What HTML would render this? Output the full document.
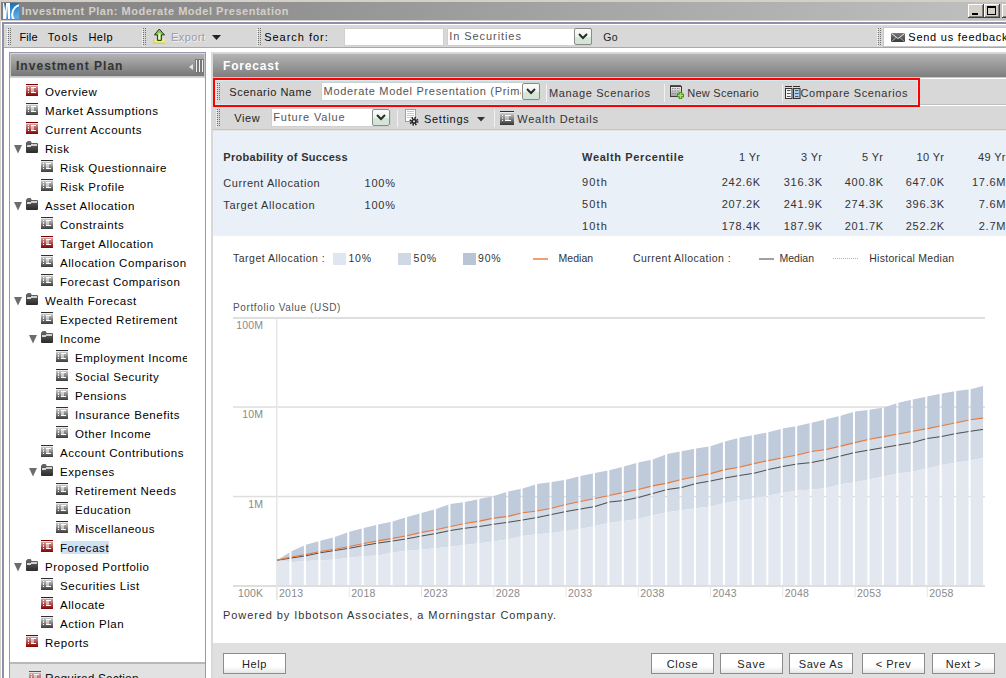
<!DOCTYPE html><html><head><meta charset="utf-8"><style>
html,body{margin:0;padding:0;}
body{width:1006px;height:678px;overflow:hidden;position:relative;background:#d4d0c8;font-family:"Liberation Sans",sans-serif;}
.t{position:absolute;white-space:nowrap;font-family:"Liberation Sans",sans-serif;}
.r{position:absolute;}
svg{position:absolute;}
</style></head><body>

<div class="r" style="left:1px;top:2px;width:1005px;height:18px;background:linear-gradient(to right,#808080,#c0c0c0);"></div>
<div class="r" style="left:0px;top:20px;width:1006px;height:1px;background:#d4d0c8;"></div>
<div class="r" style="left:1px;top:21px;width:1005px;height:657px;background:#fff;"></div>
<div class="r" style="left:2px;top:22px;width:1004px;height:656px;background:#9090ae;"></div>
<div class="r" style="left:4px;top:24px;width:1002px;height:654px;background:#fff;"></div>
<svg style="left:3px;top:3px" width="16" height="16" viewBox="0 0 16 16"><defs><linearGradient id="lg" x1="0" y1="0" x2="0.4" y2="1"><stop offset="0" stop-color="#0062b0"/><stop offset="1" stop-color="#5aaae6"/></linearGradient></defs><rect width="16" height="16" fill="url(#lg)"/><path d="M0.1 0 H7 V16 H0.1 Z" fill="#fff"/><path d="M1.1 0 L3.1 0 L2.3 8.2 Z" fill="#0a6cb8"/><path d="M3.4 16 L4.9 16 L4.1 2.5 Z" fill="#1a78c0"/><circle cx="18.7" cy="11.3" r="9.5" fill="none" stroke="#fff" stroke-width="2"/></svg>
<div class="t" style="left:21.5px;top:6.00px;font-size:11px;line-height:11px;font-weight:bold;letter-spacing:0.523px;color:#d4d0c8;">Investment Plan: Moderate Model Presentation</div>
<div class="r" style="left:968px;top:4px;width:16px;height:14px;background:#d4d0c8;box-shadow:inset -1px -1px #404040,inset 1px 1px #fff,inset -2px -2px #808080;"></div>
<div class="r" style="left:984px;top:4px;width:16px;height:14px;background:#d4d0c8;box-shadow:inset -1px -1px #404040,inset 1px 1px #fff,inset -2px -2px #808080;"></div>
<div class="r" style="left:1002px;top:4px;width:16px;height:14px;background:#d4d0c8;box-shadow:inset -1px -1px #404040,inset 1px 1px #fff,inset -2px -2px #808080;"></div>
<div class="r" style="left:972px;top:13px;width:6px;height:2px;background:#000;"></div>
<div class="r" style="left:987px;top:6px;width:9px;height:9px;border:1px solid #000;border-top-width:2px;box-sizing:border-box;"></div>
<div class="r" style="left:4px;top:25px;width:1002px;height:22px;background:#d8d8d8;"></div>
<div class="r" style="left:4px;top:47px;width:1002px;height:1px;background:#a8a8a8;"></div>
<div class="r" style="left:8px;top:28px;width:1px;height:1px;background:#707070;"></div>
<div class="r" style="left:10px;top:28px;width:1px;height:1px;background:#707070;"></div>
<div class="r" style="left:7px;top:29px;width:1px;height:1px;background:#fff;"></div>
<div class="r" style="left:8px;top:30px;width:1px;height:1px;background:#707070;"></div>
<div class="r" style="left:10px;top:30px;width:1px;height:1px;background:#707070;"></div>
<div class="r" style="left:7px;top:31px;width:1px;height:1px;background:#fff;"></div>
<div class="r" style="left:8px;top:32px;width:1px;height:1px;background:#707070;"></div>
<div class="r" style="left:10px;top:32px;width:1px;height:1px;background:#707070;"></div>
<div class="r" style="left:7px;top:33px;width:1px;height:1px;background:#fff;"></div>
<div class="r" style="left:8px;top:34px;width:1px;height:1px;background:#707070;"></div>
<div class="r" style="left:10px;top:34px;width:1px;height:1px;background:#707070;"></div>
<div class="r" style="left:7px;top:35px;width:1px;height:1px;background:#fff;"></div>
<div class="r" style="left:8px;top:36px;width:1px;height:1px;background:#707070;"></div>
<div class="r" style="left:10px;top:36px;width:1px;height:1px;background:#707070;"></div>
<div class="r" style="left:7px;top:37px;width:1px;height:1px;background:#fff;"></div>
<div class="r" style="left:8px;top:38px;width:1px;height:1px;background:#707070;"></div>
<div class="r" style="left:10px;top:38px;width:1px;height:1px;background:#707070;"></div>
<div class="r" style="left:7px;top:39px;width:1px;height:1px;background:#fff;"></div>
<div class="r" style="left:8px;top:40px;width:1px;height:1px;background:#707070;"></div>
<div class="r" style="left:10px;top:40px;width:1px;height:1px;background:#707070;"></div>
<div class="r" style="left:7px;top:41px;width:1px;height:1px;background:#fff;"></div>
<div class="r" style="left:8px;top:42px;width:1px;height:1px;background:#707070;"></div>
<div class="r" style="left:10px;top:42px;width:1px;height:1px;background:#707070;"></div>
<div class="r" style="left:7px;top:43px;width:1px;height:1px;background:#fff;"></div>
<div class="r" style="left:8px;top:44px;width:1px;height:1px;background:#707070;"></div>
<div class="r" style="left:10px;top:44px;width:1px;height:1px;background:#707070;"></div>
<div class="r" style="left:7px;top:45px;width:1px;height:1px;background:#fff;"></div>
<div class="t" style="left:19.5px;top:32.00px;font-size:11px;line-height:11px;letter-spacing:0.092px;color:#000;">File</div>
<div class="t" style="left:47.8px;top:32.00px;font-size:11px;line-height:11px;letter-spacing:1.03px;color:#000;">Tools</div>
<div class="t" style="left:88.4px;top:32.00px;font-size:11px;line-height:11px;letter-spacing:0.526px;color:#000;">Help</div>
<div class="r" style="left:143px;top:28px;width:1px;height:1px;background:#707070;"></div>
<div class="r" style="left:145px;top:28px;width:1px;height:1px;background:#707070;"></div>
<div class="r" style="left:142px;top:29px;width:1px;height:1px;background:#fff;"></div>
<div class="r" style="left:143px;top:30px;width:1px;height:1px;background:#707070;"></div>
<div class="r" style="left:145px;top:30px;width:1px;height:1px;background:#707070;"></div>
<div class="r" style="left:142px;top:31px;width:1px;height:1px;background:#fff;"></div>
<div class="r" style="left:143px;top:32px;width:1px;height:1px;background:#707070;"></div>
<div class="r" style="left:145px;top:32px;width:1px;height:1px;background:#707070;"></div>
<div class="r" style="left:142px;top:33px;width:1px;height:1px;background:#fff;"></div>
<div class="r" style="left:143px;top:34px;width:1px;height:1px;background:#707070;"></div>
<div class="r" style="left:145px;top:34px;width:1px;height:1px;background:#707070;"></div>
<div class="r" style="left:142px;top:35px;width:1px;height:1px;background:#fff;"></div>
<div class="r" style="left:143px;top:36px;width:1px;height:1px;background:#707070;"></div>
<div class="r" style="left:145px;top:36px;width:1px;height:1px;background:#707070;"></div>
<div class="r" style="left:142px;top:37px;width:1px;height:1px;background:#fff;"></div>
<div class="r" style="left:143px;top:38px;width:1px;height:1px;background:#707070;"></div>
<div class="r" style="left:145px;top:38px;width:1px;height:1px;background:#707070;"></div>
<div class="r" style="left:142px;top:39px;width:1px;height:1px;background:#fff;"></div>
<div class="r" style="left:143px;top:40px;width:1px;height:1px;background:#707070;"></div>
<div class="r" style="left:145px;top:40px;width:1px;height:1px;background:#707070;"></div>
<div class="r" style="left:142px;top:41px;width:1px;height:1px;background:#fff;"></div>
<div class="r" style="left:143px;top:42px;width:1px;height:1px;background:#707070;"></div>
<div class="r" style="left:145px;top:42px;width:1px;height:1px;background:#707070;"></div>
<div class="r" style="left:142px;top:43px;width:1px;height:1px;background:#fff;"></div>
<div class="r" style="left:143px;top:44px;width:1px;height:1px;background:#707070;"></div>
<div class="r" style="left:145px;top:44px;width:1px;height:1px;background:#707070;"></div>
<div class="r" style="left:142px;top:45px;width:1px;height:1px;background:#fff;"></div>
<svg style="left:152px;top:28px" width="14" height="17" viewBox="0 0 14 17"><rect x="1.4" y="10.9" width="11.5" height="4.8" fill="#eeee80"/><rect x="1.4" y="14.7" width="11.5" height="1" fill="#c8c848"/><rect x="1.4" y="10.9" width="1" height="4.8" fill="#d0d050"/><path d="M7.3 1 L12.4 6.9 L9.4 6.9 L9.4 12.4 L5.4 12.4 L5.4 6.9 L2.4 6.9 Z" fill="#8cc850" stroke="#203818" stroke-width="1" stroke-linejoin="round"/><rect x="6.4" y="5.5" width="2" height="6" fill="#eaffd8"/></svg>
<div class="t" style="left:171px;top:32.00px;font-size:11px;line-height:11px;letter-spacing:0.4px;color:#9c9aac;text-shadow:1px 1px #f4f4f4;">Export</div>
<svg style="left:212px;top:35px" width="9" height="5"><path d="M0 0 H9 L4.5 5 Z" fill="#222"/></svg>
<div class="r" style="left:258px;top:28px;width:1px;height:1px;background:#707070;"></div>
<div class="r" style="left:260px;top:28px;width:1px;height:1px;background:#707070;"></div>
<div class="r" style="left:257px;top:29px;width:1px;height:1px;background:#fff;"></div>
<div class="r" style="left:258px;top:30px;width:1px;height:1px;background:#707070;"></div>
<div class="r" style="left:260px;top:30px;width:1px;height:1px;background:#707070;"></div>
<div class="r" style="left:257px;top:31px;width:1px;height:1px;background:#fff;"></div>
<div class="r" style="left:258px;top:32px;width:1px;height:1px;background:#707070;"></div>
<div class="r" style="left:260px;top:32px;width:1px;height:1px;background:#707070;"></div>
<div class="r" style="left:257px;top:33px;width:1px;height:1px;background:#fff;"></div>
<div class="r" style="left:258px;top:34px;width:1px;height:1px;background:#707070;"></div>
<div class="r" style="left:260px;top:34px;width:1px;height:1px;background:#707070;"></div>
<div class="r" style="left:257px;top:35px;width:1px;height:1px;background:#fff;"></div>
<div class="r" style="left:258px;top:36px;width:1px;height:1px;background:#707070;"></div>
<div class="r" style="left:260px;top:36px;width:1px;height:1px;background:#707070;"></div>
<div class="r" style="left:257px;top:37px;width:1px;height:1px;background:#fff;"></div>
<div class="r" style="left:258px;top:38px;width:1px;height:1px;background:#707070;"></div>
<div class="r" style="left:260px;top:38px;width:1px;height:1px;background:#707070;"></div>
<div class="r" style="left:257px;top:39px;width:1px;height:1px;background:#fff;"></div>
<div class="r" style="left:258px;top:40px;width:1px;height:1px;background:#707070;"></div>
<div class="r" style="left:260px;top:40px;width:1px;height:1px;background:#707070;"></div>
<div class="r" style="left:257px;top:41px;width:1px;height:1px;background:#fff;"></div>
<div class="r" style="left:258px;top:42px;width:1px;height:1px;background:#707070;"></div>
<div class="r" style="left:260px;top:42px;width:1px;height:1px;background:#707070;"></div>
<div class="r" style="left:257px;top:43px;width:1px;height:1px;background:#fff;"></div>
<div class="r" style="left:258px;top:44px;width:1px;height:1px;background:#707070;"></div>
<div class="r" style="left:260px;top:44px;width:1px;height:1px;background:#707070;"></div>
<div class="r" style="left:257px;top:45px;width:1px;height:1px;background:#fff;"></div>
<div class="t" style="left:264.2px;top:32.00px;font-size:11px;line-height:11px;letter-spacing:0.98px;color:#000;">Search for:</div>
<div class="r" style="left:344px;top:28px;width:100px;height:18px;background:#fff;border:1px solid #d0d0d0;box-sizing:border-box;"></div>
<div class="r" style="left:447px;top:28px;width:145px;height:18px;background:#fff;border:1px solid #d0d0d0;box-sizing:border-box;"></div>
<div class="t" style="left:449.3px;top:31.00px;font-size:11px;line-height:11px;letter-spacing:0.923px;color:#555;">In Securities</div>
<div class="r" style="left:574px;top:28px;width:18px;height:17px;box-sizing:border-box;border:1px solid #8a8a8a;border-radius:2px;background:linear-gradient(#fafcfa 0%,#eef4ee 50%,#d8e8d8 52%,#d4e4d4 100%);"></div>
<svg style="left:578px;top:33px" width="10" height="7"><path d="M1 1 L5 5 L9 1" fill="none" stroke="#2a2a2a" stroke-width="2"/></svg>
<div class="t" style="left:603.2px;top:32.00px;font-size:10.5px;line-height:10.5px;letter-spacing:0.293px;color:#222;">Go</div>
<div class="r" style="left:878px;top:28px;width:1px;height:1px;background:#707070;"></div>
<div class="r" style="left:880px;top:28px;width:1px;height:1px;background:#707070;"></div>
<div class="r" style="left:877px;top:29px;width:1px;height:1px;background:#fff;"></div>
<div class="r" style="left:878px;top:30px;width:1px;height:1px;background:#707070;"></div>
<div class="r" style="left:880px;top:30px;width:1px;height:1px;background:#707070;"></div>
<div class="r" style="left:877px;top:31px;width:1px;height:1px;background:#fff;"></div>
<div class="r" style="left:878px;top:32px;width:1px;height:1px;background:#707070;"></div>
<div class="r" style="left:880px;top:32px;width:1px;height:1px;background:#707070;"></div>
<div class="r" style="left:877px;top:33px;width:1px;height:1px;background:#fff;"></div>
<div class="r" style="left:878px;top:34px;width:1px;height:1px;background:#707070;"></div>
<div class="r" style="left:880px;top:34px;width:1px;height:1px;background:#707070;"></div>
<div class="r" style="left:877px;top:35px;width:1px;height:1px;background:#fff;"></div>
<div class="r" style="left:878px;top:36px;width:1px;height:1px;background:#707070;"></div>
<div class="r" style="left:880px;top:36px;width:1px;height:1px;background:#707070;"></div>
<div class="r" style="left:877px;top:37px;width:1px;height:1px;background:#fff;"></div>
<div class="r" style="left:878px;top:38px;width:1px;height:1px;background:#707070;"></div>
<div class="r" style="left:880px;top:38px;width:1px;height:1px;background:#707070;"></div>
<div class="r" style="left:877px;top:39px;width:1px;height:1px;background:#fff;"></div>
<div class="r" style="left:878px;top:40px;width:1px;height:1px;background:#707070;"></div>
<div class="r" style="left:880px;top:40px;width:1px;height:1px;background:#707070;"></div>
<div class="r" style="left:877px;top:41px;width:1px;height:1px;background:#fff;"></div>
<div class="r" style="left:878px;top:42px;width:1px;height:1px;background:#707070;"></div>
<div class="r" style="left:880px;top:42px;width:1px;height:1px;background:#707070;"></div>
<div class="r" style="left:877px;top:43px;width:1px;height:1px;background:#fff;"></div>
<div class="r" style="left:878px;top:44px;width:1px;height:1px;background:#707070;"></div>
<div class="r" style="left:880px;top:44px;width:1px;height:1px;background:#707070;"></div>
<div class="r" style="left:877px;top:45px;width:1px;height:1px;background:#fff;"></div>
<div class="r" style="left:883px;top:27px;width:123px;height:20px;background:#fff;border:1px solid #c8c8c8;border-right:none;box-sizing:border-box;"></div>
<svg style="left:891px;top:33px" width="14" height="9"><defs><linearGradient id="env" x1="0" y1="0" x2="0" y2="1"><stop offset="0" stop-color="#7a7a7a"/><stop offset="1" stop-color="#3a3a3a"/></linearGradient></defs><rect width="14" height="9" fill="url(#env)"/><path d="M0.5 0.5 L7 5.5 L13.5 0.5" fill="none" stroke="#e8e8e8" stroke-width="1"/><path d="M0.5 8.5 L5 4.5 M13.5 8.5 L9 4.5" stroke="#aaa" stroke-width="1"/></svg>
<div class="t" style="left:908.3px;top:32.00px;font-size:11px;line-height:11px;letter-spacing:0.75px;color:#000;">Send us feedback</div>
<div class="r" style="left:9px;top:52px;width:197px;height:626px;background:#9898b6;"></div>
<div class="r" style="left:10px;top:53px;width:195px;height:625px;background:#fff;"></div>
<div class="r" style="left:10px;top:53px;width:195px;height:25px;background:#c8c8c8;"></div>
<div class="r" style="left:10px;top:53px;width:195px;height:1px;background:#d8d8d8;"></div>
<div class="r" style="left:10px;top:77px;width:195px;height:1px;background:#d4d4d4;"></div>
<div class="r" style="left:11px;top:54px;width:193px;height:22px;background:linear-gradient(#b4b4b4,#767676);"></div>
<div class="t" style="left:16px;top:60.00px;font-size:12px;line-height:12px;font-weight:bold;letter-spacing:1.03px;color:#333;">Investment Plan</div>
<svg style="left:189px;top:64px" width="4" height="6"><path d="M4 0 L0 3 L4 6 Z" fill="#e4e4e4"/></svg>
<div class="r" style="left:195px;top:59px;width:9px;height:14px;background:#787878;"></div>
<div class="r" style="left:196px;top:60px;width:1px;height:12px;background:#f0f0f0;"></div>
<div class="r" style="left:199px;top:60px;width:1px;height:12px;background:#f0f0f0;"></div>
<div class="r" style="left:202px;top:60px;width:1px;height:12px;background:#f0f0f0;"></div>
<svg style="left:26px;top:84px" width="12" height="12" viewBox="0 0 12 12"><defs><linearGradient id="g2684" x1="0" y1="0" x2="0" y2="1"><stop offset="0" stop-color="#dcaaaa"/><stop offset="1" stop-color="#860000"/></linearGradient></defs><rect x="0" y="0" width="12" height="1" fill="#7a0000"/><rect x="0" y="1" width="12" height="11" fill="url(#g2684)"/><rect x="0" y="1" width="12" height="1" fill="#f4f0f0" opacity="0.8"/><rect x="2" y="3" width="1" height="1" fill="#fff"/><rect x="2" y="5" width="1" height="2" fill="#fff" opacity="0.8"/><rect x="2" y="8" width="1" height="1" fill="#fff"/><rect x="5" y="3" width="5" height="1" fill="#fff"/><rect x="5" y="8" width="5" height="1" fill="#fff"/><rect x="5" y="4" width="3" height="4" fill="#fff" opacity="0.55"/></svg>
<div class="t" style="left:45px;top:87.00px;font-size:11.5px;line-height:11.5px;letter-spacing:0.55px;color:#000;">Overview</div>
<svg style="left:26px;top:103px" width="12" height="12" viewBox="0 0 12 12"><defs><linearGradient id="g26103" x1="0" y1="0" x2="0" y2="1"><stop offset="0" stop-color="#d8d8d8"/><stop offset="1" stop-color="#3a3a3a"/></linearGradient></defs><rect x="0" y="0" width="12" height="1" fill="#303030"/><rect x="0" y="1" width="12" height="11" fill="url(#g26103)"/><rect x="0" y="1" width="12" height="1" fill="#f4f0f0" opacity="0.8"/><rect x="2" y="3" width="1" height="1" fill="#fff"/><rect x="2" y="5" width="1" height="2" fill="#fff" opacity="0.8"/><rect x="2" y="8" width="1" height="1" fill="#fff"/><rect x="5" y="3" width="5" height="1" fill="#fff"/><rect x="5" y="8" width="5" height="1" fill="#fff"/><rect x="5" y="4" width="3" height="4" fill="#fff" opacity="0.55"/></svg>
<div class="t" style="left:45px;top:106.00px;font-size:11.5px;line-height:11.5px;letter-spacing:0.55px;color:#000;">Market Assumptions</div>
<svg style="left:26px;top:122px" width="12" height="12" viewBox="0 0 12 12"><defs><linearGradient id="g26122" x1="0" y1="0" x2="0" y2="1"><stop offset="0" stop-color="#dcaaaa"/><stop offset="1" stop-color="#860000"/></linearGradient></defs><rect x="0" y="0" width="12" height="1" fill="#7a0000"/><rect x="0" y="1" width="12" height="11" fill="url(#g26122)"/><rect x="0" y="1" width="12" height="1" fill="#f4f0f0" opacity="0.8"/><rect x="2" y="3" width="1" height="1" fill="#fff"/><rect x="2" y="5" width="1" height="2" fill="#fff" opacity="0.8"/><rect x="2" y="8" width="1" height="1" fill="#fff"/><rect x="5" y="3" width="5" height="1" fill="#fff"/><rect x="5" y="8" width="5" height="1" fill="#fff"/><rect x="5" y="4" width="3" height="4" fill="#fff" opacity="0.55"/></svg>
<div class="t" style="left:45px;top:125.00px;font-size:11.5px;line-height:11.5px;letter-spacing:0.55px;color:#000;">Current Accounts</div>
<svg style="left:14px;top:145px" width="9" height="9"><path d="M0 0 H8 L4 8.5 Z" fill="#6c6c6c"/></svg>
<svg style="left:26px;top:141px" width="12" height="12" viewBox="0 0 12 12"><defs><linearGradient id="f26141" x1="0" y1="0" x2="0" y2="1"><stop offset="0" stop-color="#6c6c6c"/><stop offset="1" stop-color="#2a2a2a"/></linearGradient></defs><path d="M1 1 Q1 0 2 0 L4.3 0 Q5 0 5.3 1 L5.6 2 L11 2 Q12 2 12 3 L12 11 Q12 12 11 12 L1 12 Q0 12 0 11 L0 2 Q0 1 1 1 Z" fill="url(#f26141)"/><rect x="1" y="4" width="4" height="2" fill="#d4d4d4"/><rect x="5" y="3" width="6" height="2" fill="#cfcfcf"/><rect x="5" y="5" width="6" height="1" fill="#505050"/></svg>
<div class="t" style="left:45px;top:144.00px;font-size:11.5px;line-height:11.5px;letter-spacing:0.55px;color:#000;">Risk</div>
<svg style="left:41px;top:160px" width="12" height="12" viewBox="0 0 12 12"><defs><linearGradient id="g41160" x1="0" y1="0" x2="0" y2="1"><stop offset="0" stop-color="#d8d8d8"/><stop offset="1" stop-color="#3a3a3a"/></linearGradient></defs><rect x="0" y="0" width="12" height="1" fill="#303030"/><rect x="0" y="1" width="12" height="11" fill="url(#g41160)"/><rect x="0" y="1" width="12" height="1" fill="#f4f0f0" opacity="0.8"/><rect x="2" y="3" width="1" height="1" fill="#fff"/><rect x="2" y="5" width="1" height="2" fill="#fff" opacity="0.8"/><rect x="2" y="8" width="1" height="1" fill="#fff"/><rect x="5" y="3" width="5" height="1" fill="#fff"/><rect x="5" y="8" width="5" height="1" fill="#fff"/><rect x="5" y="4" width="3" height="4" fill="#fff" opacity="0.55"/></svg>
<div class="t" style="left:60px;top:163.00px;font-size:11.5px;line-height:11.5px;letter-spacing:0.55px;color:#000;">Risk Questionnaire</div>
<svg style="left:41px;top:179px" width="12" height="12" viewBox="0 0 12 12"><defs><linearGradient id="g41179" x1="0" y1="0" x2="0" y2="1"><stop offset="0" stop-color="#d8d8d8"/><stop offset="1" stop-color="#3a3a3a"/></linearGradient></defs><rect x="0" y="0" width="12" height="1" fill="#303030"/><rect x="0" y="1" width="12" height="11" fill="url(#g41179)"/><rect x="0" y="1" width="12" height="1" fill="#f4f0f0" opacity="0.8"/><rect x="2" y="3" width="1" height="1" fill="#fff"/><rect x="2" y="5" width="1" height="2" fill="#fff" opacity="0.8"/><rect x="2" y="8" width="1" height="1" fill="#fff"/><rect x="5" y="3" width="5" height="1" fill="#fff"/><rect x="5" y="8" width="5" height="1" fill="#fff"/><rect x="5" y="4" width="3" height="4" fill="#fff" opacity="0.55"/></svg>
<div class="t" style="left:60px;top:182.00px;font-size:11.5px;line-height:11.5px;letter-spacing:0.55px;color:#000;">Risk Profile</div>
<svg style="left:14px;top:202px" width="9" height="9"><path d="M0 0 H8 L4 8.5 Z" fill="#6c6c6c"/></svg>
<svg style="left:26px;top:198px" width="12" height="12" viewBox="0 0 12 12"><defs><linearGradient id="f26198" x1="0" y1="0" x2="0" y2="1"><stop offset="0" stop-color="#6c6c6c"/><stop offset="1" stop-color="#2a2a2a"/></linearGradient></defs><path d="M1 1 Q1 0 2 0 L4.3 0 Q5 0 5.3 1 L5.6 2 L11 2 Q12 2 12 3 L12 11 Q12 12 11 12 L1 12 Q0 12 0 11 L0 2 Q0 1 1 1 Z" fill="url(#f26198)"/><rect x="1" y="4" width="4" height="2" fill="#d4d4d4"/><rect x="5" y="3" width="6" height="2" fill="#cfcfcf"/><rect x="5" y="5" width="6" height="1" fill="#505050"/></svg>
<div class="t" style="left:45px;top:201.00px;font-size:11.5px;line-height:11.5px;letter-spacing:0.55px;color:#000;">Asset Allocation</div>
<svg style="left:41px;top:217px" width="12" height="12" viewBox="0 0 12 12"><defs><linearGradient id="g41217" x1="0" y1="0" x2="0" y2="1"><stop offset="0" stop-color="#d8d8d8"/><stop offset="1" stop-color="#3a3a3a"/></linearGradient></defs><rect x="0" y="0" width="12" height="1" fill="#303030"/><rect x="0" y="1" width="12" height="11" fill="url(#g41217)"/><rect x="0" y="1" width="12" height="1" fill="#f4f0f0" opacity="0.8"/><rect x="2" y="3" width="1" height="1" fill="#fff"/><rect x="2" y="5" width="1" height="2" fill="#fff" opacity="0.8"/><rect x="2" y="8" width="1" height="1" fill="#fff"/><rect x="5" y="3" width="5" height="1" fill="#fff"/><rect x="5" y="8" width="5" height="1" fill="#fff"/><rect x="5" y="4" width="3" height="4" fill="#fff" opacity="0.55"/></svg>
<div class="t" style="left:60px;top:220.00px;font-size:11.5px;line-height:11.5px;letter-spacing:0.55px;color:#000;">Constraints</div>
<svg style="left:41px;top:236px" width="12" height="12" viewBox="0 0 12 12"><defs><linearGradient id="g41236" x1="0" y1="0" x2="0" y2="1"><stop offset="0" stop-color="#dcaaaa"/><stop offset="1" stop-color="#860000"/></linearGradient></defs><rect x="0" y="0" width="12" height="1" fill="#7a0000"/><rect x="0" y="1" width="12" height="11" fill="url(#g41236)"/><rect x="0" y="1" width="12" height="1" fill="#f4f0f0" opacity="0.8"/><rect x="2" y="3" width="1" height="1" fill="#fff"/><rect x="2" y="5" width="1" height="2" fill="#fff" opacity="0.8"/><rect x="2" y="8" width="1" height="1" fill="#fff"/><rect x="5" y="3" width="5" height="1" fill="#fff"/><rect x="5" y="8" width="5" height="1" fill="#fff"/><rect x="5" y="4" width="3" height="4" fill="#fff" opacity="0.55"/></svg>
<div class="t" style="left:60px;top:239.00px;font-size:11.5px;line-height:11.5px;letter-spacing:0.55px;color:#000;">Target Allocation</div>
<svg style="left:41px;top:255px" width="12" height="12" viewBox="0 0 12 12"><defs><linearGradient id="g41255" x1="0" y1="0" x2="0" y2="1"><stop offset="0" stop-color="#d8d8d8"/><stop offset="1" stop-color="#3a3a3a"/></linearGradient></defs><rect x="0" y="0" width="12" height="1" fill="#303030"/><rect x="0" y="1" width="12" height="11" fill="url(#g41255)"/><rect x="0" y="1" width="12" height="1" fill="#f4f0f0" opacity="0.8"/><rect x="2" y="3" width="1" height="1" fill="#fff"/><rect x="2" y="5" width="1" height="2" fill="#fff" opacity="0.8"/><rect x="2" y="8" width="1" height="1" fill="#fff"/><rect x="5" y="3" width="5" height="1" fill="#fff"/><rect x="5" y="8" width="5" height="1" fill="#fff"/><rect x="5" y="4" width="3" height="4" fill="#fff" opacity="0.55"/></svg>
<div class="t" style="left:60px;top:258.00px;font-size:11.5px;line-height:11.5px;letter-spacing:0.55px;color:#000;">Allocation Comparison</div>
<svg style="left:41px;top:274px" width="12" height="12" viewBox="0 0 12 12"><defs><linearGradient id="g41274" x1="0" y1="0" x2="0" y2="1"><stop offset="0" stop-color="#d8d8d8"/><stop offset="1" stop-color="#3a3a3a"/></linearGradient></defs><rect x="0" y="0" width="12" height="1" fill="#303030"/><rect x="0" y="1" width="12" height="11" fill="url(#g41274)"/><rect x="0" y="1" width="12" height="1" fill="#f4f0f0" opacity="0.8"/><rect x="2" y="3" width="1" height="1" fill="#fff"/><rect x="2" y="5" width="1" height="2" fill="#fff" opacity="0.8"/><rect x="2" y="8" width="1" height="1" fill="#fff"/><rect x="5" y="3" width="5" height="1" fill="#fff"/><rect x="5" y="8" width="5" height="1" fill="#fff"/><rect x="5" y="4" width="3" height="4" fill="#fff" opacity="0.55"/></svg>
<div class="t" style="left:60px;top:277.00px;font-size:11.5px;line-height:11.5px;letter-spacing:0.55px;color:#000;">Forecast Comparison</div>
<svg style="left:14px;top:297px" width="9" height="9"><path d="M0 0 H8 L4 8.5 Z" fill="#6c6c6c"/></svg>
<svg style="left:26px;top:293px" width="12" height="12" viewBox="0 0 12 12"><defs><linearGradient id="f26293" x1="0" y1="0" x2="0" y2="1"><stop offset="0" stop-color="#6c6c6c"/><stop offset="1" stop-color="#2a2a2a"/></linearGradient></defs><path d="M1 1 Q1 0 2 0 L4.3 0 Q5 0 5.3 1 L5.6 2 L11 2 Q12 2 12 3 L12 11 Q12 12 11 12 L1 12 Q0 12 0 11 L0 2 Q0 1 1 1 Z" fill="url(#f26293)"/><rect x="1" y="4" width="4" height="2" fill="#d4d4d4"/><rect x="5" y="3" width="6" height="2" fill="#cfcfcf"/><rect x="5" y="5" width="6" height="1" fill="#505050"/></svg>
<div class="t" style="left:45px;top:296.00px;font-size:11.5px;line-height:11.5px;letter-spacing:0.55px;color:#000;">Wealth Forecast</div>
<svg style="left:41px;top:312px" width="12" height="12" viewBox="0 0 12 12"><defs><linearGradient id="g41312" x1="0" y1="0" x2="0" y2="1"><stop offset="0" stop-color="#d8d8d8"/><stop offset="1" stop-color="#3a3a3a"/></linearGradient></defs><rect x="0" y="0" width="12" height="1" fill="#303030"/><rect x="0" y="1" width="12" height="11" fill="url(#g41312)"/><rect x="0" y="1" width="12" height="1" fill="#f4f0f0" opacity="0.8"/><rect x="2" y="3" width="1" height="1" fill="#fff"/><rect x="2" y="5" width="1" height="2" fill="#fff" opacity="0.8"/><rect x="2" y="8" width="1" height="1" fill="#fff"/><rect x="5" y="3" width="5" height="1" fill="#fff"/><rect x="5" y="8" width="5" height="1" fill="#fff"/><rect x="5" y="4" width="3" height="4" fill="#fff" opacity="0.55"/></svg>
<div class="t" style="left:60px;top:315.00px;font-size:11.5px;line-height:11.5px;letter-spacing:0.55px;color:#000;">Expected Retirement</div>
<svg style="left:29px;top:335px" width="9" height="9"><path d="M0 0 H8 L4 8.5 Z" fill="#6c6c6c"/></svg>
<svg style="left:41px;top:331px" width="12" height="12" viewBox="0 0 12 12"><defs><linearGradient id="f41331" x1="0" y1="0" x2="0" y2="1"><stop offset="0" stop-color="#6c6c6c"/><stop offset="1" stop-color="#2a2a2a"/></linearGradient></defs><path d="M1 1 Q1 0 2 0 L4.3 0 Q5 0 5.3 1 L5.6 2 L11 2 Q12 2 12 3 L12 11 Q12 12 11 12 L1 12 Q0 12 0 11 L0 2 Q0 1 1 1 Z" fill="url(#f41331)"/><rect x="1" y="4" width="4" height="2" fill="#d4d4d4"/><rect x="5" y="3" width="6" height="2" fill="#cfcfcf"/><rect x="5" y="5" width="6" height="1" fill="#505050"/></svg>
<div class="t" style="left:60px;top:334.00px;font-size:11.5px;line-height:11.5px;letter-spacing:0.55px;color:#000;">Income</div>
<svg style="left:56px;top:350px" width="12" height="12" viewBox="0 0 12 12"><defs><linearGradient id="g56350" x1="0" y1="0" x2="0" y2="1"><stop offset="0" stop-color="#d8d8d8"/><stop offset="1" stop-color="#3a3a3a"/></linearGradient></defs><rect x="0" y="0" width="12" height="1" fill="#303030"/><rect x="0" y="1" width="12" height="11" fill="url(#g56350)"/><rect x="0" y="1" width="12" height="1" fill="#f4f0f0" opacity="0.8"/><rect x="2" y="3" width="1" height="1" fill="#fff"/><rect x="2" y="5" width="1" height="2" fill="#fff" opacity="0.8"/><rect x="2" y="8" width="1" height="1" fill="#fff"/><rect x="5" y="3" width="5" height="1" fill="#fff"/><rect x="5" y="8" width="5" height="1" fill="#fff"/><rect x="5" y="4" width="3" height="4" fill="#fff" opacity="0.55"/></svg>
<div class="r" style="left:75px;top:349px;width:112px;height:17px;overflow:hidden;">
<div class="t" style="left:0;top:4px;font-size:11.5px;line-height:11.5px;letter-spacing:0.55px;color:#000;">Employment Income</div></div>
<svg style="left:56px;top:369px" width="12" height="12" viewBox="0 0 12 12"><defs><linearGradient id="g56369" x1="0" y1="0" x2="0" y2="1"><stop offset="0" stop-color="#d8d8d8"/><stop offset="1" stop-color="#3a3a3a"/></linearGradient></defs><rect x="0" y="0" width="12" height="1" fill="#303030"/><rect x="0" y="1" width="12" height="11" fill="url(#g56369)"/><rect x="0" y="1" width="12" height="1" fill="#f4f0f0" opacity="0.8"/><rect x="2" y="3" width="1" height="1" fill="#fff"/><rect x="2" y="5" width="1" height="2" fill="#fff" opacity="0.8"/><rect x="2" y="8" width="1" height="1" fill="#fff"/><rect x="5" y="3" width="5" height="1" fill="#fff"/><rect x="5" y="8" width="5" height="1" fill="#fff"/><rect x="5" y="4" width="3" height="4" fill="#fff" opacity="0.55"/></svg>
<div class="t" style="left:75px;top:372.00px;font-size:11.5px;line-height:11.5px;letter-spacing:0.55px;color:#000;">Social Security</div>
<svg style="left:56px;top:388px" width="12" height="12" viewBox="0 0 12 12"><defs><linearGradient id="g56388" x1="0" y1="0" x2="0" y2="1"><stop offset="0" stop-color="#d8d8d8"/><stop offset="1" stop-color="#3a3a3a"/></linearGradient></defs><rect x="0" y="0" width="12" height="1" fill="#303030"/><rect x="0" y="1" width="12" height="11" fill="url(#g56388)"/><rect x="0" y="1" width="12" height="1" fill="#f4f0f0" opacity="0.8"/><rect x="2" y="3" width="1" height="1" fill="#fff"/><rect x="2" y="5" width="1" height="2" fill="#fff" opacity="0.8"/><rect x="2" y="8" width="1" height="1" fill="#fff"/><rect x="5" y="3" width="5" height="1" fill="#fff"/><rect x="5" y="8" width="5" height="1" fill="#fff"/><rect x="5" y="4" width="3" height="4" fill="#fff" opacity="0.55"/></svg>
<div class="t" style="left:75px;top:391.00px;font-size:11.5px;line-height:11.5px;letter-spacing:0.55px;color:#000;">Pensions</div>
<svg style="left:56px;top:407px" width="12" height="12" viewBox="0 0 12 12"><defs><linearGradient id="g56407" x1="0" y1="0" x2="0" y2="1"><stop offset="0" stop-color="#d8d8d8"/><stop offset="1" stop-color="#3a3a3a"/></linearGradient></defs><rect x="0" y="0" width="12" height="1" fill="#303030"/><rect x="0" y="1" width="12" height="11" fill="url(#g56407)"/><rect x="0" y="1" width="12" height="1" fill="#f4f0f0" opacity="0.8"/><rect x="2" y="3" width="1" height="1" fill="#fff"/><rect x="2" y="5" width="1" height="2" fill="#fff" opacity="0.8"/><rect x="2" y="8" width="1" height="1" fill="#fff"/><rect x="5" y="3" width="5" height="1" fill="#fff"/><rect x="5" y="8" width="5" height="1" fill="#fff"/><rect x="5" y="4" width="3" height="4" fill="#fff" opacity="0.55"/></svg>
<div class="t" style="left:75px;top:410.00px;font-size:11.5px;line-height:11.5px;letter-spacing:0.55px;color:#000;">Insurance Benefits</div>
<svg style="left:56px;top:426px" width="12" height="12" viewBox="0 0 12 12"><defs><linearGradient id="g56426" x1="0" y1="0" x2="0" y2="1"><stop offset="0" stop-color="#d8d8d8"/><stop offset="1" stop-color="#3a3a3a"/></linearGradient></defs><rect x="0" y="0" width="12" height="1" fill="#303030"/><rect x="0" y="1" width="12" height="11" fill="url(#g56426)"/><rect x="0" y="1" width="12" height="1" fill="#f4f0f0" opacity="0.8"/><rect x="2" y="3" width="1" height="1" fill="#fff"/><rect x="2" y="5" width="1" height="2" fill="#fff" opacity="0.8"/><rect x="2" y="8" width="1" height="1" fill="#fff"/><rect x="5" y="3" width="5" height="1" fill="#fff"/><rect x="5" y="8" width="5" height="1" fill="#fff"/><rect x="5" y="4" width="3" height="4" fill="#fff" opacity="0.55"/></svg>
<div class="t" style="left:75px;top:429.00px;font-size:11.5px;line-height:11.5px;letter-spacing:0.55px;color:#000;">Other Income</div>
<svg style="left:41px;top:445px" width="12" height="12" viewBox="0 0 12 12"><defs><linearGradient id="g41445" x1="0" y1="0" x2="0" y2="1"><stop offset="0" stop-color="#d8d8d8"/><stop offset="1" stop-color="#3a3a3a"/></linearGradient></defs><rect x="0" y="0" width="12" height="1" fill="#303030"/><rect x="0" y="1" width="12" height="11" fill="url(#g41445)"/><rect x="0" y="1" width="12" height="1" fill="#f4f0f0" opacity="0.8"/><rect x="2" y="3" width="1" height="1" fill="#fff"/><rect x="2" y="5" width="1" height="2" fill="#fff" opacity="0.8"/><rect x="2" y="8" width="1" height="1" fill="#fff"/><rect x="5" y="3" width="5" height="1" fill="#fff"/><rect x="5" y="8" width="5" height="1" fill="#fff"/><rect x="5" y="4" width="3" height="4" fill="#fff" opacity="0.55"/></svg>
<div class="t" style="left:60px;top:448.00px;font-size:11.5px;line-height:11.5px;letter-spacing:0.55px;color:#000;">Account Contributions</div>
<svg style="left:29px;top:468px" width="9" height="9"><path d="M0 0 H8 L4 8.5 Z" fill="#6c6c6c"/></svg>
<svg style="left:41px;top:464px" width="12" height="12" viewBox="0 0 12 12"><defs><linearGradient id="f41464" x1="0" y1="0" x2="0" y2="1"><stop offset="0" stop-color="#6c6c6c"/><stop offset="1" stop-color="#2a2a2a"/></linearGradient></defs><path d="M1 1 Q1 0 2 0 L4.3 0 Q5 0 5.3 1 L5.6 2 L11 2 Q12 2 12 3 L12 11 Q12 12 11 12 L1 12 Q0 12 0 11 L0 2 Q0 1 1 1 Z" fill="url(#f41464)"/><rect x="1" y="4" width="4" height="2" fill="#d4d4d4"/><rect x="5" y="3" width="6" height="2" fill="#cfcfcf"/><rect x="5" y="5" width="6" height="1" fill="#505050"/></svg>
<div class="t" style="left:60px;top:467.00px;font-size:11.5px;line-height:11.5px;letter-spacing:0.55px;color:#000;">Expenses</div>
<svg style="left:56px;top:483px" width="12" height="12" viewBox="0 0 12 12"><defs><linearGradient id="g56483" x1="0" y1="0" x2="0" y2="1"><stop offset="0" stop-color="#d8d8d8"/><stop offset="1" stop-color="#3a3a3a"/></linearGradient></defs><rect x="0" y="0" width="12" height="1" fill="#303030"/><rect x="0" y="1" width="12" height="11" fill="url(#g56483)"/><rect x="0" y="1" width="12" height="1" fill="#f4f0f0" opacity="0.8"/><rect x="2" y="3" width="1" height="1" fill="#fff"/><rect x="2" y="5" width="1" height="2" fill="#fff" opacity="0.8"/><rect x="2" y="8" width="1" height="1" fill="#fff"/><rect x="5" y="3" width="5" height="1" fill="#fff"/><rect x="5" y="8" width="5" height="1" fill="#fff"/><rect x="5" y="4" width="3" height="4" fill="#fff" opacity="0.55"/></svg>
<div class="t" style="left:75px;top:486.00px;font-size:11.5px;line-height:11.5px;letter-spacing:0.55px;color:#000;">Retirement Needs</div>
<svg style="left:56px;top:502px" width="12" height="12" viewBox="0 0 12 12"><defs><linearGradient id="g56502" x1="0" y1="0" x2="0" y2="1"><stop offset="0" stop-color="#d8d8d8"/><stop offset="1" stop-color="#3a3a3a"/></linearGradient></defs><rect x="0" y="0" width="12" height="1" fill="#303030"/><rect x="0" y="1" width="12" height="11" fill="url(#g56502)"/><rect x="0" y="1" width="12" height="1" fill="#f4f0f0" opacity="0.8"/><rect x="2" y="3" width="1" height="1" fill="#fff"/><rect x="2" y="5" width="1" height="2" fill="#fff" opacity="0.8"/><rect x="2" y="8" width="1" height="1" fill="#fff"/><rect x="5" y="3" width="5" height="1" fill="#fff"/><rect x="5" y="8" width="5" height="1" fill="#fff"/><rect x="5" y="4" width="3" height="4" fill="#fff" opacity="0.55"/></svg>
<div class="t" style="left:75px;top:505.00px;font-size:11.5px;line-height:11.5px;letter-spacing:0.55px;color:#000;">Education</div>
<svg style="left:56px;top:521px" width="12" height="12" viewBox="0 0 12 12"><defs><linearGradient id="g56521" x1="0" y1="0" x2="0" y2="1"><stop offset="0" stop-color="#d8d8d8"/><stop offset="1" stop-color="#3a3a3a"/></linearGradient></defs><rect x="0" y="0" width="12" height="1" fill="#303030"/><rect x="0" y="1" width="12" height="11" fill="url(#g56521)"/><rect x="0" y="1" width="12" height="1" fill="#f4f0f0" opacity="0.8"/><rect x="2" y="3" width="1" height="1" fill="#fff"/><rect x="2" y="5" width="1" height="2" fill="#fff" opacity="0.8"/><rect x="2" y="8" width="1" height="1" fill="#fff"/><rect x="5" y="3" width="5" height="1" fill="#fff"/><rect x="5" y="8" width="5" height="1" fill="#fff"/><rect x="5" y="4" width="3" height="4" fill="#fff" opacity="0.55"/></svg>
<div class="t" style="left:75px;top:524.00px;font-size:11.5px;line-height:11.5px;letter-spacing:0.55px;color:#000;">Miscellaneous</div>
<svg style="left:41px;top:540px" width="12" height="12" viewBox="0 0 12 12"><defs><linearGradient id="g41540" x1="0" y1="0" x2="0" y2="1"><stop offset="0" stop-color="#dcaaaa"/><stop offset="1" stop-color="#860000"/></linearGradient></defs><rect x="0" y="0" width="12" height="1" fill="#7a0000"/><rect x="0" y="1" width="12" height="11" fill="url(#g41540)"/><rect x="0" y="1" width="12" height="1" fill="#f4f0f0" opacity="0.8"/><rect x="2" y="3" width="1" height="1" fill="#fff"/><rect x="2" y="5" width="1" height="2" fill="#fff" opacity="0.8"/><rect x="2" y="8" width="1" height="1" fill="#fff"/><rect x="5" y="3" width="5" height="1" fill="#fff"/><rect x="5" y="8" width="5" height="1" fill="#fff"/><rect x="5" y="4" width="3" height="4" fill="#fff" opacity="0.55"/></svg>
<div class="r" style="left:61px;top:541px;width:48px;height:13px;background:#cfe2f5;"></div>
<div class="t" style="left:60px;top:543.00px;font-size:11.5px;line-height:11.5px;letter-spacing:0.55px;color:#000;">Forecast</div>
<svg style="left:14px;top:563px" width="9" height="9"><path d="M0 0 H8 L4 8.5 Z" fill="#6c6c6c"/></svg>
<svg style="left:26px;top:559px" width="12" height="12" viewBox="0 0 12 12"><defs><linearGradient id="f26559" x1="0" y1="0" x2="0" y2="1"><stop offset="0" stop-color="#6c6c6c"/><stop offset="1" stop-color="#2a2a2a"/></linearGradient></defs><path d="M1 1 Q1 0 2 0 L4.3 0 Q5 0 5.3 1 L5.6 2 L11 2 Q12 2 12 3 L12 11 Q12 12 11 12 L1 12 Q0 12 0 11 L0 2 Q0 1 1 1 Z" fill="url(#f26559)"/><rect x="1" y="4" width="4" height="2" fill="#d4d4d4"/><rect x="5" y="3" width="6" height="2" fill="#cfcfcf"/><rect x="5" y="5" width="6" height="1" fill="#505050"/></svg>
<div class="t" style="left:45px;top:562.00px;font-size:11.5px;line-height:11.5px;letter-spacing:0.55px;color:#000;">Proposed Portfolio</div>
<svg style="left:41px;top:578px" width="12" height="12" viewBox="0 0 12 12"><defs><linearGradient id="g41578" x1="0" y1="0" x2="0" y2="1"><stop offset="0" stop-color="#d8d8d8"/><stop offset="1" stop-color="#3a3a3a"/></linearGradient></defs><rect x="0" y="0" width="12" height="1" fill="#303030"/><rect x="0" y="1" width="12" height="11" fill="url(#g41578)"/><rect x="0" y="1" width="12" height="1" fill="#f4f0f0" opacity="0.8"/><rect x="2" y="3" width="1" height="1" fill="#fff"/><rect x="2" y="5" width="1" height="2" fill="#fff" opacity="0.8"/><rect x="2" y="8" width="1" height="1" fill="#fff"/><rect x="5" y="3" width="5" height="1" fill="#fff"/><rect x="5" y="8" width="5" height="1" fill="#fff"/><rect x="5" y="4" width="3" height="4" fill="#fff" opacity="0.55"/></svg>
<div class="t" style="left:60px;top:581.00px;font-size:11.5px;line-height:11.5px;letter-spacing:0.55px;color:#000;">Securities List</div>
<svg style="left:41px;top:597px" width="12" height="12" viewBox="0 0 12 12"><defs><linearGradient id="g41597" x1="0" y1="0" x2="0" y2="1"><stop offset="0" stop-color="#dcaaaa"/><stop offset="1" stop-color="#860000"/></linearGradient></defs><rect x="0" y="0" width="12" height="1" fill="#7a0000"/><rect x="0" y="1" width="12" height="11" fill="url(#g41597)"/><rect x="0" y="1" width="12" height="1" fill="#f4f0f0" opacity="0.8"/><rect x="2" y="3" width="1" height="1" fill="#fff"/><rect x="2" y="5" width="1" height="2" fill="#fff" opacity="0.8"/><rect x="2" y="8" width="1" height="1" fill="#fff"/><rect x="5" y="3" width="5" height="1" fill="#fff"/><rect x="5" y="8" width="5" height="1" fill="#fff"/><rect x="5" y="4" width="3" height="4" fill="#fff" opacity="0.55"/></svg>
<div class="t" style="left:60px;top:600.00px;font-size:11.5px;line-height:11.5px;letter-spacing:0.55px;color:#000;">Allocate</div>
<svg style="left:41px;top:616px" width="12" height="12" viewBox="0 0 12 12"><defs><linearGradient id="g41616" x1="0" y1="0" x2="0" y2="1"><stop offset="0" stop-color="#d8d8d8"/><stop offset="1" stop-color="#3a3a3a"/></linearGradient></defs><rect x="0" y="0" width="12" height="1" fill="#303030"/><rect x="0" y="1" width="12" height="11" fill="url(#g41616)"/><rect x="0" y="1" width="12" height="1" fill="#f4f0f0" opacity="0.8"/><rect x="2" y="3" width="1" height="1" fill="#fff"/><rect x="2" y="5" width="1" height="2" fill="#fff" opacity="0.8"/><rect x="2" y="8" width="1" height="1" fill="#fff"/><rect x="5" y="3" width="5" height="1" fill="#fff"/><rect x="5" y="8" width="5" height="1" fill="#fff"/><rect x="5" y="4" width="3" height="4" fill="#fff" opacity="0.55"/></svg>
<div class="t" style="left:60px;top:619.00px;font-size:11.5px;line-height:11.5px;letter-spacing:0.55px;color:#000;">Action Plan</div>
<svg style="left:26px;top:635px" width="12" height="12" viewBox="0 0 12 12"><defs><linearGradient id="g26635" x1="0" y1="0" x2="0" y2="1"><stop offset="0" stop-color="#dcaaaa"/><stop offset="1" stop-color="#860000"/></linearGradient></defs><rect x="0" y="0" width="12" height="1" fill="#7a0000"/><rect x="0" y="1" width="12" height="11" fill="url(#g26635)"/><rect x="0" y="1" width="12" height="1" fill="#f4f0f0" opacity="0.8"/><rect x="2" y="3" width="1" height="1" fill="#fff"/><rect x="2" y="5" width="1" height="2" fill="#fff" opacity="0.8"/><rect x="2" y="8" width="1" height="1" fill="#fff"/><rect x="5" y="3" width="5" height="1" fill="#fff"/><rect x="5" y="8" width="5" height="1" fill="#fff"/><rect x="5" y="4" width="3" height="4" fill="#fff" opacity="0.55"/></svg>
<div class="t" style="left:45px;top:638.00px;font-size:11.5px;line-height:11.5px;letter-spacing:0.55px;color:#000;">Reports</div>
<div class="r" style="left:10px;top:662px;width:195px;height:2px;background:#b8b8b8;"></div>
<div class="r" style="left:10px;top:664px;width:195px;height:14px;background:#e2e2e2;"></div>
<div style="position:absolute;left:29px;top:671px;opacity:0.75">
<svg style="left:0px;top:0px" width="12" height="12" viewBox="0 0 12 12"><defs><linearGradient id="g00" x1="0" y1="0" x2="0" y2="1"><stop offset="0" stop-color="#dcaaaa"/><stop offset="1" stop-color="#860000"/></linearGradient></defs><rect x="0" y="0" width="12" height="1" fill="#7a0000"/><rect x="0" y="1" width="12" height="11" fill="url(#g00)"/><rect x="0" y="1" width="12" height="1" fill="#f4f0f0" opacity="0.8"/><rect x="2" y="3" width="1" height="1" fill="#fff"/><rect x="2" y="5" width="1" height="2" fill="#fff" opacity="0.8"/><rect x="2" y="8" width="1" height="1" fill="#fff"/><rect x="5" y="3" width="5" height="1" fill="#fff"/><rect x="5" y="8" width="5" height="1" fill="#fff"/><rect x="5" y="4" width="3" height="4" fill="#fff" opacity="0.55"/></svg>
</div>
<div class="t" style="left:45px;top:673.00px;font-size:12px;line-height:12px;letter-spacing:0.1px;color:#111;">Required Section</div>
<div class="r" style="left:211px;top:52px;width:795px;height:626px;background:#d8d8d8;"></div>
<div class="r" style="left:213px;top:53px;width:793px;height:625px;background:#fff;"></div>
<div class="r" style="left:213px;top:53px;width:793px;height:25px;background:#c8c8c8;"></div>
<div class="r" style="left:213px;top:53px;width:793px;height:1px;background:#d6d6d6;"></div>
<div class="r" style="left:213px;top:54px;width:793px;height:23px;background:linear-gradient(#b4b4b4,#7e7e7e);"></div>
<div class="t" style="left:223px;top:60.00px;font-size:12px;line-height:12px;font-weight:bold;letter-spacing:0.8px;color:#fff;">Forecast</div>
<div class="r" style="left:213px;top:78px;width:793px;height:1px;background:#fff;"></div>
<div class="r" style="left:213px;top:79px;width:793px;height:25px;background:#d8d8d8;"></div>
<div class="r" style="left:213px;top:104px;width:793px;height:1px;background:#c0c0c0;"></div>
<div class="r" style="left:213px;top:105px;width:793px;height:1px;background:#fff;"></div>
<div class="r" style="left:217px;top:83px;width:1px;height:1px;background:#707070;"></div>
<div class="r" style="left:219px;top:83px;width:1px;height:1px;background:#707070;"></div>
<div class="r" style="left:216px;top:84px;width:1px;height:1px;background:#fff;"></div>
<div class="r" style="left:217px;top:85px;width:1px;height:1px;background:#707070;"></div>
<div class="r" style="left:219px;top:85px;width:1px;height:1px;background:#707070;"></div>
<div class="r" style="left:216px;top:86px;width:1px;height:1px;background:#fff;"></div>
<div class="r" style="left:217px;top:87px;width:1px;height:1px;background:#707070;"></div>
<div class="r" style="left:219px;top:87px;width:1px;height:1px;background:#707070;"></div>
<div class="r" style="left:216px;top:88px;width:1px;height:1px;background:#fff;"></div>
<div class="r" style="left:217px;top:89px;width:1px;height:1px;background:#707070;"></div>
<div class="r" style="left:219px;top:89px;width:1px;height:1px;background:#707070;"></div>
<div class="r" style="left:216px;top:90px;width:1px;height:1px;background:#fff;"></div>
<div class="r" style="left:217px;top:91px;width:1px;height:1px;background:#707070;"></div>
<div class="r" style="left:219px;top:91px;width:1px;height:1px;background:#707070;"></div>
<div class="r" style="left:216px;top:92px;width:1px;height:1px;background:#fff;"></div>
<div class="r" style="left:217px;top:93px;width:1px;height:1px;background:#707070;"></div>
<div class="r" style="left:219px;top:93px;width:1px;height:1px;background:#707070;"></div>
<div class="r" style="left:216px;top:94px;width:1px;height:1px;background:#fff;"></div>
<div class="r" style="left:217px;top:95px;width:1px;height:1px;background:#707070;"></div>
<div class="r" style="left:219px;top:95px;width:1px;height:1px;background:#707070;"></div>
<div class="r" style="left:216px;top:96px;width:1px;height:1px;background:#fff;"></div>
<div class="r" style="left:217px;top:97px;width:1px;height:1px;background:#707070;"></div>
<div class="r" style="left:219px;top:97px;width:1px;height:1px;background:#707070;"></div>
<div class="r" style="left:216px;top:98px;width:1px;height:1px;background:#fff;"></div>
<div class="r" style="left:217px;top:99px;width:1px;height:1px;background:#707070;"></div>
<div class="r" style="left:219px;top:99px;width:1px;height:1px;background:#707070;"></div>
<div class="r" style="left:216px;top:100px;width:1px;height:1px;background:#fff;"></div>
<div class="t" style="left:229.3px;top:87.00px;font-size:11px;line-height:11px;letter-spacing:0.516px;color:#222;">Scenario Name</div>
<div class="r" style="left:321px;top:82px;width:219px;height:19px;background:#fff;border:1px solid #d0d0d0;box-sizing:border-box;"></div>
<div class="r" style="left:322px;top:83px;width:199px;height:17px;overflow:hidden;">
<div class="t" style="left:1.6px;top:2.69px;font-size:11px;line-height:11px;letter-spacing:0.690px;color:#555;">Moderate Model Presentation (Primary)</div></div>
<div class="r" style="left:522px;top:83px;width:18px;height:17px;box-sizing:border-box;border:1px solid #8a8a8a;border-radius:2px;background:linear-gradient(#fafcfa 0%,#eef4ee 50%,#d8e8d8 52%,#d4e4d4 100%);"></div>
<svg style="left:526px;top:88px" width="10" height="7"><path d="M1 1 L5 5 L9 1" fill="none" stroke="#2a2a2a" stroke-width="2"/></svg>
<div class="r" style="left:546px;top:84px;width:1px;height:18px;background:#f2f2f2;"></div>
<div class="t" style="left:549px;top:88.00px;font-size:11px;line-height:11px;letter-spacing:0.619px;color:#333;">Manage Scenarios</div>
<div class="r" style="left:664px;top:84px;width:1px;height:18px;background:#f2f2f2;"></div>
<svg style="left:670px;top:85px" width="15" height="15" viewBox="0 0 15 15"><defs><linearGradient id="ns" x1="0" y1="0" x2="0" y2="1"><stop offset="0" stop-color="#f0f0f0"/><stop offset="1" stop-color="#a0a0a0"/></linearGradient></defs><rect x="0" y="0" width="11" height="1" fill="#505050"/><rect x="0.5" y="1.5" width="11" height="10" fill="url(#ns)" stroke="#3c3c3c"/><path d="M2 3.5 H10 M2 6 H10 M2 8.5 H10" stroke="#8a8a8a" stroke-dasharray="1.5 1"/><path d="M7 10.5 H14 M10.5 7 V14" stroke="#3a8a18" stroke-width="3.4"/><path d="M7.8 10.5 H13.2 M10.5 7.8 V13.2" stroke="#a8e060" stroke-width="1.6"/></svg>
<div class="t" style="left:687.2px;top:88.00px;font-size:11px;line-height:11px;letter-spacing:0.266px;color:#333;">New Scenario</div>
<div class="r" style="left:782px;top:84px;width:1px;height:18px;background:#f2f2f2;"></div>
<svg style="left:785px;top:86px" width="16" height="13" viewBox="0 0 16 13"><rect x="0" y="0" width="7" height="1" fill="#303030"/><rect x="8" y="0" width="7" height="1" fill="#303030"/><rect x="0.5" y="2.5" width="6.5" height="10" fill="#f4f4f4" stroke="#333"/><rect x="8.5" y="2.5" width="6.5" height="10" fill="#a8d0f4" stroke="#333"/><path d="M2 4.5 H5.5 M2 7.5 H5.5 M2 10.5 H5.5 M10 4.5 H13.5 M10 7.5 H13.5 M10 10.5 H13.5" stroke="#555" stroke-width="1"/></svg>
<div class="t" style="left:800.4px;top:88.00px;font-size:11px;line-height:11px;letter-spacing:0.624px;color:#333;">Compare Scenarios</div>
<div class="r" style="left:213px;top:106px;width:793px;height:23px;background:#d8d8d8;"></div>
<div class="r" style="left:213px;top:129px;width:793px;height:1px;background:#c4c4c4;"></div>
<div class="r" style="left:215px;top:80px;width:703px;height:25px;border:1px solid #d4ecf0;box-sizing:border-box;"></div>
<div class="r" style="left:213px;top:78px;width:707px;height:29px;border:2px solid #ff0000;box-sizing:border-box;"></div>
<div class="r" style="left:213px;top:130px;width:793px;height:1px;background:#e4e4e4;"></div>
<div class="r" style="left:217px;top:109px;width:1px;height:1px;background:#707070;"></div>
<div class="r" style="left:219px;top:109px;width:1px;height:1px;background:#707070;"></div>
<div class="r" style="left:216px;top:110px;width:1px;height:1px;background:#fff;"></div>
<div class="r" style="left:217px;top:111px;width:1px;height:1px;background:#707070;"></div>
<div class="r" style="left:219px;top:111px;width:1px;height:1px;background:#707070;"></div>
<div class="r" style="left:216px;top:112px;width:1px;height:1px;background:#fff;"></div>
<div class="r" style="left:217px;top:113px;width:1px;height:1px;background:#707070;"></div>
<div class="r" style="left:219px;top:113px;width:1px;height:1px;background:#707070;"></div>
<div class="r" style="left:216px;top:114px;width:1px;height:1px;background:#fff;"></div>
<div class="r" style="left:217px;top:115px;width:1px;height:1px;background:#707070;"></div>
<div class="r" style="left:219px;top:115px;width:1px;height:1px;background:#707070;"></div>
<div class="r" style="left:216px;top:116px;width:1px;height:1px;background:#fff;"></div>
<div class="r" style="left:217px;top:117px;width:1px;height:1px;background:#707070;"></div>
<div class="r" style="left:219px;top:117px;width:1px;height:1px;background:#707070;"></div>
<div class="r" style="left:216px;top:118px;width:1px;height:1px;background:#fff;"></div>
<div class="r" style="left:217px;top:119px;width:1px;height:1px;background:#707070;"></div>
<div class="r" style="left:219px;top:119px;width:1px;height:1px;background:#707070;"></div>
<div class="r" style="left:216px;top:120px;width:1px;height:1px;background:#fff;"></div>
<div class="r" style="left:217px;top:121px;width:1px;height:1px;background:#707070;"></div>
<div class="r" style="left:219px;top:121px;width:1px;height:1px;background:#707070;"></div>
<div class="r" style="left:216px;top:122px;width:1px;height:1px;background:#fff;"></div>
<div class="r" style="left:217px;top:123px;width:1px;height:1px;background:#707070;"></div>
<div class="r" style="left:219px;top:123px;width:1px;height:1px;background:#707070;"></div>
<div class="r" style="left:216px;top:124px;width:1px;height:1px;background:#fff;"></div>
<div class="r" style="left:217px;top:125px;width:1px;height:1px;background:#707070;"></div>
<div class="r" style="left:219px;top:125px;width:1px;height:1px;background:#707070;"></div>
<div class="r" style="left:216px;top:126px;width:1px;height:1px;background:#fff;"></div>
<div class="t" style="left:234.3px;top:113.00px;font-size:11px;line-height:11px;letter-spacing:0.585px;color:#222;">View</div>
<div class="r" style="left:271px;top:108px;width:120px;height:19px;background:#fff;border:1px solid #d0d0d0;box-sizing:border-box;"></div>
<div class="t" style="left:273.2px;top:112.00px;font-size:11px;line-height:11px;letter-spacing:0.84px;color:#555;">Future Value</div>
<div class="r" style="left:372px;top:109px;width:18px;height:17px;box-sizing:border-box;border:1px solid #8a8a8a;border-radius:2px;background:linear-gradient(#fafcfa 0%,#eef4ee 50%,#d8e8d8 52%,#d4e4d4 100%);"></div>
<svg style="left:376px;top:114px" width="10" height="7"><path d="M1 1 L5 5 L9 1" fill="none" stroke="#2a2a2a" stroke-width="2"/></svg>
<div class="r" style="left:397px;top:110px;width:1px;height:17px;background:#f2f2f2;"></div>
<svg style="left:404px;top:109px" width="17" height="17" viewBox="0 0 17 17"><rect x="1.5" y="0.5" width="10" height="12" fill="#fff" stroke="#a0a0a0"/><path d="M3 2.5 H10 M3 4.5 H10 M3 6.5 H10 M3 8.5 H8" stroke="#c8c8c8"/><circle cx="10" cy="12.3" r="3.4" fill="none" stroke="#262626" stroke-width="2.2" stroke-dasharray="1.4 1.27"/><circle cx="10" cy="12.3" r="2.6" fill="#262626"/><circle cx="10" cy="12.3" r="1.1" fill="#d8d8d8"/></svg>
<div class="t" style="left:424px;top:114.00px;font-size:11px;line-height:11px;letter-spacing:0.708px;color:#111;">Settings</div>
<svg style="left:477px;top:117px" width="9" height="5"><path d="M0 0 H8 L4 4.5 Z" fill="#333"/></svg>
<div class="r" style="left:494px;top:110px;width:1px;height:17px;background:#f2f2f2;"></div>
<svg style="left:500px;top:111px" width="14" height="14" viewBox="0 0 14 14"><defs><linearGradient id="wd" x1="0" y1="0" x2="0" y2="1"><stop offset="0" stop-color="#d8d8d8"/><stop offset="1" stop-color="#333"/></linearGradient></defs><rect width="14" height="1" fill="#303030"/><rect y="1" width="14" height="13" fill="url(#wd)"/><rect y="1" width="14" height="1" fill="#f0f0f0" opacity=".8"/><rect x="2" y="4" width="1" height="1" fill="#fff"/><rect x="2" y="6" width="1" height="2" fill="#fff" opacity=".6"/><rect x="2" y="9" width="1" height="1" fill="#fff"/><rect x="5" y="4" width="6" height="1" fill="#fff"/><rect x="5" y="9" width="6" height="1" fill="#fff"/><rect x="5" y="5" width="4" height="4" fill="#fff" opacity=".45"/></svg>
<div class="t" style="left:517.2px;top:114.00px;font-size:11px;line-height:11px;letter-spacing:0.768px;color:#333;">Wealth Details</div>
<div class="r" style="left:213px;top:131px;width:793px;height:105px;background:#eaf0f8;"></div>
<div class="t" style="left:223.3px;top:152.00px;font-size:11px;line-height:11px;font-weight:bold;letter-spacing:0.301px;color:#333;">Probability of Success</div>
<div class="t" style="left:223.3px;top:178.00px;font-size:11px;line-height:11px;letter-spacing:0.563px;color:#333;">Current Allocation</div>
<div class="t" style="left:364.5px;top:178.00px;font-size:11px;line-height:11px;letter-spacing:0.789px;color:#333;">100%</div>
<div class="t" style="left:223.3px;top:200.00px;font-size:11px;line-height:11px;letter-spacing:0.667px;color:#333;">Target Allocation</div>
<div class="t" style="left:364.5px;top:200.00px;font-size:11px;line-height:11px;letter-spacing:0.789px;color:#333;">100%</div>
<div class="t" style="left:582.1px;top:152.00px;font-size:11px;line-height:11px;font-weight:bold;letter-spacing:0.619px;color:#333;">Wealth Percentile</div>
<div class="t" style="right:245.64203600285168px;top:152.00px;font-size:11px;line-height:11px;letter-spacing:0.358px;color:#333;">1 Yr</div>
<div class="t" style="right:183.64203600285168px;top:152.00px;font-size:11px;line-height:11px;letter-spacing:0.358px;color:#333;">3 Yr</div>
<div class="t" style="right:122.64203600285168px;top:152.00px;font-size:11px;line-height:11px;letter-spacing:0.358px;color:#333;">5 Yr</div>
<div class="t" style="right:61.650113065886444px;top:152.00px;font-size:11px;line-height:11px;letter-spacing:0.35px;color:#333;">10 Yr</div>
<div class="t" style="right:0.15011306588644402px;top:152.00px;font-size:11px;line-height:11px;letter-spacing:0.35px;color:#333;">49 Yr</div>
<div class="t" style="left:582.1px;top:177.00px;font-size:11px;line-height:11px;letter-spacing:1.097px;color:#333;">90th</div>
<div class="t" style="right:245.34068516072705px;top:177.00px;font-size:11px;line-height:11px;letter-spacing:0.659px;color:#333;">242.6K</div>
<div class="t" style="right:183.34068516072705px;top:177.00px;font-size:11px;line-height:11px;letter-spacing:0.659px;color:#333;">316.3K</div>
<div class="t" style="right:122.34068516072705px;top:177.00px;font-size:11px;line-height:11px;letter-spacing:0.659px;color:#333;">400.8K</div>
<div class="t" style="right:61.34068516072705px;top:177.00px;font-size:11px;line-height:11px;letter-spacing:0.659px;color:#333;">647.0K</div>
<div class="t" style="right:-0.22269682351361553px;top:177.00px;font-size:11px;line-height:11px;letter-spacing:0.723px;color:#333;">17.6M</div>
<div class="t" style="left:582.1px;top:199.00px;font-size:11px;line-height:11px;letter-spacing:1.097px;color:#333;">50th</div>
<div class="t" style="right:245.34068516072705px;top:199.00px;font-size:11px;line-height:11px;letter-spacing:0.659px;color:#333;">207.2K</div>
<div class="t" style="right:183.34068516072705px;top:199.00px;font-size:11px;line-height:11px;letter-spacing:0.659px;color:#333;">241.9K</div>
<div class="t" style="right:122.34068516072705px;top:199.00px;font-size:11px;line-height:11px;letter-spacing:0.659px;color:#333;">274.3K</div>
<div class="t" style="right:61.34068516072705px;top:199.00px;font-size:11px;line-height:11px;letter-spacing:0.659px;color:#333;">396.3K</div>
<div class="t" style="right:-0.2707750380551488px;top:199.00px;font-size:11px;line-height:11px;letter-spacing:0.771px;color:#333;">7.6M</div>
<div class="t" style="left:582.1px;top:221.00px;font-size:11px;line-height:11px;letter-spacing:1.097px;color:#333;">10th</div>
<div class="t" style="right:245.34068516072705px;top:221.00px;font-size:11px;line-height:11px;letter-spacing:0.659px;color:#333;">178.4K</div>
<div class="t" style="right:183.34068516072705px;top:221.00px;font-size:11px;line-height:11px;letter-spacing:0.659px;color:#333;">187.9K</div>
<div class="t" style="right:122.34068516072705px;top:221.00px;font-size:11px;line-height:11px;letter-spacing:0.659px;color:#333;">201.7K</div>
<div class="t" style="right:61.34068516072705px;top:221.00px;font-size:11px;line-height:11px;letter-spacing:0.659px;color:#333;">252.2K</div>
<div class="t" style="right:-0.2707750380551488px;top:221.00px;font-size:11px;line-height:11px;letter-spacing:0.771px;color:#333;">2.7M</div>
<div class="t" style="left:233px;top:253.00px;font-size:10.5px;line-height:10.5px;letter-spacing:0.491px;color:#333;">Target Allocation :</div>
<div class="r" style="left:333px;top:253px;width:13px;height:12px;background:#dfe6ef;"></div>
<div class="t" style="left:348.4px;top:253.00px;font-size:10.5px;line-height:10.5px;letter-spacing:0.792px;color:#333;">10%</div>
<div class="r" style="left:398px;top:253px;width:13px;height:12px;background:#cfd8e4;"></div>
<div class="t" style="left:413.5px;top:253.00px;font-size:10.5px;line-height:10.5px;letter-spacing:0.792px;color:#333;">50%</div>
<div class="r" style="left:463px;top:253px;width:13px;height:12px;background:#b9c5d6;"></div>
<div class="t" style="left:478px;top:253.00px;font-size:10.5px;line-height:10.5px;letter-spacing:0.792px;color:#333;">90%</div>
<div class="r" style="left:533px;top:258px;width:15px;height:2px;background:#f2a070;"></div>
<div class="t" style="left:558.6px;top:253.00px;font-size:10.5px;line-height:10.5px;letter-spacing:0.032px;color:#333;">Median</div>
<div class="t" style="left:633px;top:253.00px;font-size:10.5px;line-height:10.5px;letter-spacing:0.469px;color:#333;">Current Allocation :</div>
<div class="r" style="left:759px;top:258px;width:15px;height:2px;background:#a0a0a0;"></div>
<div class="t" style="left:779.4px;top:253.00px;font-size:10.5px;line-height:10.5px;letter-spacing:0.032px;color:#333;">Median</div>
<div class="r" style="left:833px;top:258px;width:1px;height:1px;background:#b0b0b0;"></div>
<div class="r" style="left:835px;top:258px;width:1px;height:1px;background:#b0b0b0;"></div>
<div class="r" style="left:837px;top:258px;width:1px;height:1px;background:#b0b0b0;"></div>
<div class="r" style="left:839px;top:258px;width:1px;height:1px;background:#b0b0b0;"></div>
<div class="r" style="left:841px;top:258px;width:1px;height:1px;background:#b0b0b0;"></div>
<div class="r" style="left:843px;top:258px;width:1px;height:1px;background:#b0b0b0;"></div>
<div class="r" style="left:845px;top:258px;width:1px;height:1px;background:#b0b0b0;"></div>
<div class="r" style="left:847px;top:258px;width:1px;height:1px;background:#b0b0b0;"></div>
<div class="r" style="left:849px;top:258px;width:1px;height:1px;background:#b0b0b0;"></div>
<div class="r" style="left:851px;top:258px;width:1px;height:1px;background:#b0b0b0;"></div>
<div class="r" style="left:853px;top:258px;width:1px;height:1px;background:#b0b0b0;"></div>
<div class="r" style="left:855px;top:258px;width:1px;height:1px;background:#b0b0b0;"></div>
<div class="r" style="left:857px;top:258px;width:1px;height:1px;background:#b0b0b0;"></div>
<div class="t" style="left:869.2px;top:253.00px;font-size:10.5px;line-height:10.5px;letter-spacing:0.279px;color:#333;">Historical Median</div>
<div class="t" style="left:233px;top:303.00px;font-size:10px;line-height:10px;letter-spacing:0.628px;color:#555;">Portfolio Value (USD)</div>
<svg style="left:0;top:0" width="1006" height="678" viewBox="0 0 1006 678"><rect x="233" y="317" width="752" height="2" fill="#dedede"/><rect x="233" y="406.3" width="752" height="1.5" fill="#dedede"/><rect x="233" y="495.8" width="752" height="1.5" fill="#dedede"/><rect x="233" y="585" width="752" height="2" fill="#dedede"/><rect x="276" y="318" width="1.5" height="282" fill="#e6e6e6"/><rect x="276.50" y="586" width="1" height="11" fill="#e6e6e6"/><rect x="348.75" y="586" width="1" height="11" fill="#e6e6e6"/><rect x="421.00" y="586" width="1" height="11" fill="#e6e6e6"/><rect x="493.25" y="586" width="1" height="11" fill="#e6e6e6"/><rect x="565.50" y="586" width="1" height="11" fill="#e6e6e6"/><rect x="637.75" y="586" width="1" height="11" fill="#e6e6e6"/><rect x="710.00" y="586" width="1" height="11" fill="#e6e6e6"/><rect x="782.25" y="586" width="1" height="11" fill="#e6e6e6"/><rect x="854.50" y="586" width="1" height="11" fill="#e6e6e6"/><rect x="926.75" y="586" width="1" height="11" fill="#e6e6e6"/><clipPath id="bars"><rect x="277.00" y="300" width="12.45" height="290"/><rect x="291.45" y="300" width="12.45" height="290"/><rect x="305.90" y="300" width="12.45" height="290"/><rect x="320.35" y="300" width="12.45" height="290"/><rect x="334.80" y="300" width="12.45" height="290"/><rect x="349.25" y="300" width="12.45" height="290"/><rect x="363.70" y="300" width="12.45" height="290"/><rect x="378.15" y="300" width="12.45" height="290"/><rect x="392.60" y="300" width="12.45" height="290"/><rect x="407.05" y="300" width="12.45" height="290"/><rect x="421.50" y="300" width="12.45" height="290"/><rect x="435.95" y="300" width="12.45" height="290"/><rect x="450.40" y="300" width="12.45" height="290"/><rect x="464.85" y="300" width="12.45" height="290"/><rect x="479.30" y="300" width="12.45" height="290"/><rect x="493.75" y="300" width="12.45" height="290"/><rect x="508.20" y="300" width="12.45" height="290"/><rect x="522.65" y="300" width="12.45" height="290"/><rect x="537.10" y="300" width="12.45" height="290"/><rect x="551.55" y="300" width="12.45" height="290"/><rect x="566.00" y="300" width="12.45" height="290"/><rect x="580.45" y="300" width="12.45" height="290"/><rect x="594.90" y="300" width="12.45" height="290"/><rect x="609.35" y="300" width="12.45" height="290"/><rect x="623.80" y="300" width="12.45" height="290"/><rect x="638.25" y="300" width="12.45" height="290"/><rect x="652.70" y="300" width="12.45" height="290"/><rect x="667.15" y="300" width="12.45" height="290"/><rect x="681.60" y="300" width="12.45" height="290"/><rect x="696.05" y="300" width="12.45" height="290"/><rect x="710.50" y="300" width="12.45" height="290"/><rect x="724.95" y="300" width="12.45" height="290"/><rect x="739.40" y="300" width="12.45" height="290"/><rect x="753.85" y="300" width="12.45" height="290"/><rect x="768.30" y="300" width="12.45" height="290"/><rect x="782.75" y="300" width="12.45" height="290"/><rect x="797.20" y="300" width="12.45" height="290"/><rect x="811.65" y="300" width="12.45" height="290"/><rect x="826.10" y="300" width="12.45" height="290"/><rect x="840.55" y="300" width="12.45" height="290"/><rect x="855.00" y="300" width="12.45" height="290"/><rect x="869.45" y="300" width="12.45" height="290"/><rect x="883.90" y="300" width="12.45" height="290"/><rect x="898.35" y="300" width="12.45" height="290"/><rect x="912.80" y="300" width="12.45" height="290"/><rect x="927.25" y="300" width="12.45" height="290"/><rect x="941.70" y="300" width="12.45" height="290"/><rect x="956.15" y="300" width="12.45" height="290"/><rect x="970.60" y="300" width="12.45" height="290"/></clipPath><g clip-path="url(#bars)"><path d="M277.00 560.20 L291.45 551.20 L305.90 544.70 L320.35 540.80 L334.80 536.90 L349.25 531.80 L363.70 528.00 L378.15 524.40 L392.60 521.40 L407.05 516.90 L421.50 513.00 L435.95 508.90 L450.40 504.10 L464.85 502.00 L479.30 499.00 L493.75 496.00 L508.20 491.60 L522.65 488.60 L537.10 484.10 L551.55 482.00 L566.00 479.80 L580.45 475.90 L594.90 473.10 L609.35 470.30 L623.80 466.60 L638.25 462.40 L652.70 459.60 L667.15 454.00 L681.60 451.20 L696.05 448.40 L710.50 446.20 L724.95 441.40 L739.40 437.80 L753.85 435.00 L768.30 432.20 L782.75 428.50 L797.20 426.10 L811.65 422.70 L826.10 419.30 L840.55 415.70 L855.00 411.40 L869.45 409.80 L883.90 407.40 L898.35 402.80 L912.80 399.40 L927.25 396.40 L941.70 393.50 L956.15 390.90 L970.60 389.30 L985.05 385.50 L985.05 417.70 L970.60 419.70 L956.15 422.70 L941.70 425.70 L927.25 428.60 L912.80 431.20 L898.35 434.00 L883.90 436.60 L869.45 439.20 L855.00 442.60 L840.55 446.10 L826.10 449.50 L811.65 451.50 L797.20 455.00 L782.75 457.70 L768.30 460.60 L753.85 463.60 L739.40 467.20 L724.95 469.60 L710.50 473.60 L696.05 476.50 L681.60 479.50 L667.15 483.10 L652.70 485.90 L638.25 489.50 L623.80 492.40 L609.35 495.50 L594.90 498.50 L580.45 501.50 L566.00 504.50 L551.55 508.30 L537.10 511.00 L522.65 512.80 L508.20 516.40 L493.75 518.10 L479.30 521.10 L464.85 523.50 L450.40 526.50 L435.95 529.80 L421.50 532.40 L407.05 535.80 L392.60 538.40 L378.15 540.90 L363.70 543.50 L349.25 546.50 L334.80 549.20 L320.35 551.50 L305.90 554.60 L291.45 557.00 L277.00 560.20 Z" fill="#bfcadb"/><path d="M277.00 560.20 L291.45 557.00 L305.90 554.60 L320.35 551.50 L334.80 549.20 L349.25 546.50 L363.70 543.50 L378.15 540.90 L392.60 538.40 L407.05 535.80 L421.50 532.40 L435.95 529.80 L450.40 526.50 L464.85 523.50 L479.30 521.10 L493.75 518.10 L508.20 516.40 L522.65 512.80 L537.10 511.00 L551.55 508.30 L566.00 504.50 L580.45 501.50 L594.90 498.50 L609.35 495.50 L623.80 492.40 L638.25 489.50 L652.70 485.90 L667.15 483.10 L681.60 479.50 L696.05 476.50 L710.50 473.60 L724.95 469.60 L739.40 467.20 L753.85 463.60 L768.30 460.60 L782.75 457.70 L797.20 455.00 L811.65 451.50 L826.10 449.50 L840.55 446.10 L855.00 442.60 L869.45 439.20 L883.90 436.60 L898.35 434.00 L912.80 431.20 L927.25 428.60 L941.70 425.70 L956.15 422.70 L970.60 419.70 L985.05 417.70 L985.05 457.50 L970.60 460.50 L956.15 462.40 L941.70 465.00 L927.25 468.40 L912.80 471.40 L898.35 473.40 L883.90 476.40 L869.45 479.30 L855.00 482.30 L840.55 484.30 L826.10 488.30 L811.65 489.40 L797.20 490.50 L782.75 493.00 L768.30 495.40 L753.85 498.40 L739.40 500.40 L724.95 503.00 L710.50 506.40 L696.05 508.30 L681.60 510.30 L667.15 512.30 L652.70 515.30 L638.25 518.90 L623.80 520.90 L609.35 522.90 L594.90 525.90 L580.45 528.90 L566.00 531.10 L551.55 532.90 L537.10 534.30 L522.65 536.10 L508.20 539.30 L493.75 541.50 L479.30 543.30 L464.85 545.00 L450.40 546.80 L435.95 548.30 L421.50 549.50 L407.05 550.80 L392.60 552.60 L378.15 555.40 L363.70 556.30 L349.25 557.80 L334.80 559.60 L320.35 560.50 L305.90 561.10 L291.45 562.20 L277.00 560.20 Z" fill="#d2dbe6"/><path d="M277.00 560.20 L291.45 562.20 L305.90 561.10 L320.35 560.50 L334.80 559.60 L349.25 557.80 L363.70 556.30 L378.15 555.40 L392.60 552.60 L407.05 550.80 L421.50 549.50 L435.95 548.30 L450.40 546.80 L464.85 545.00 L479.30 543.30 L493.75 541.50 L508.20 539.30 L522.65 536.10 L537.10 534.30 L551.55 532.90 L566.00 531.10 L580.45 528.90 L594.90 525.90 L609.35 522.90 L623.80 520.90 L638.25 518.90 L652.70 515.30 L667.15 512.30 L681.60 510.30 L696.05 508.30 L710.50 506.40 L724.95 503.00 L739.40 500.40 L753.85 498.40 L768.30 495.40 L782.75 493.00 L797.20 490.50 L811.65 489.40 L826.10 488.30 L840.55 484.30 L855.00 482.30 L869.45 479.30 L883.90 476.40 L898.35 473.40 L912.80 471.40 L927.25 468.40 L941.70 465.00 L956.15 462.40 L970.60 460.50 L985.05 457.50 L985.05 585.00 L970.60 585.00 L956.15 585.00 L941.70 585.00 L927.25 585.00 L912.80 585.00 L898.35 585.00 L883.90 585.00 L869.45 585.00 L855.00 585.00 L840.55 585.00 L826.10 585.00 L811.65 585.00 L797.20 585.00 L782.75 585.00 L768.30 585.00 L753.85 585.00 L739.40 585.00 L724.95 585.00 L710.50 585.00 L696.05 585.00 L681.60 585.00 L667.15 585.00 L652.70 585.00 L638.25 585.00 L623.80 585.00 L609.35 585.00 L594.90 585.00 L580.45 585.00 L566.00 585.00 L551.55 585.00 L537.10 585.00 L522.65 585.00 L508.20 585.00 L493.75 585.00 L479.30 585.00 L464.85 585.00 L450.40 585.00 L435.95 585.00 L421.50 585.00 L407.05 585.00 L392.60 585.00 L378.15 585.00 L363.70 585.00 L349.25 585.00 L334.80 585.00 L320.35 585.00 L305.90 585.00 L291.45 585.00 L277.00 585.00 Z" fill="#e3e8f0"/><polyline points="277.00,560.20 291.45,558.00 305.90,555.70 320.35,552.70 334.80,550.40 349.25,548.30 363.70,545.60 378.15,543.10 392.60,541.10 407.05,538.80 421.50,536.00 435.95,533.60 450.40,530.40 464.85,528.30 479.30,526.50 493.75,524.30 508.20,522.30 522.65,520.00 537.10,517.60 551.55,514.60 566.00,511.60 580.45,508.90 594.90,506.50 609.35,502.10 623.80,500.40 638.25,497.40 652.70,493.40 667.15,489.50 681.60,487.50 696.05,483.50 710.50,481.10 724.95,477.90 739.40,475.50 753.85,473.20 768.30,469.60 782.75,466.60 797.20,464.00 811.65,462.40 826.10,459.50 840.55,455.90 855.00,452.50 869.45,449.90 883.90,447.50 898.35,445.10 912.80,442.60 927.25,438.60 941.70,436.60 956.15,433.60 970.60,431.20 985.05,429.00" fill="none" stroke="#505050" stroke-width="1.05" stroke-linejoin="round"/><polyline points="277.00,560.20 291.45,557.00 305.90,554.60 320.35,551.50 334.80,549.20 349.25,546.50 363.70,543.50 378.15,540.90 392.60,538.40 407.05,535.80 421.50,532.40 435.95,529.80 450.40,526.50 464.85,523.50 479.30,521.10 493.75,518.10 508.20,516.40 522.65,512.80 537.10,511.00 551.55,508.30 566.00,504.50 580.45,501.50 594.90,498.50 609.35,495.50 623.80,492.40 638.25,489.50 652.70,485.90 667.15,483.10 681.60,479.50 696.05,476.50 710.50,473.60 724.95,469.60 739.40,467.20 753.85,463.60 768.30,460.60 782.75,457.70 797.20,455.00 811.65,451.50 826.10,449.50 840.55,446.10 855.00,442.60 869.45,439.20 883.90,436.60 898.35,434.00 912.80,431.20 927.25,428.60 941.70,425.70 956.15,422.70 970.60,419.70 985.05,417.70" fill="none" stroke="#e8783a" stroke-width="1.15" stroke-linejoin="round"/></g></svg>
<div class="t" style="right:743px;top:320.00px;font-size:10.5px;line-height:10.5px;letter-spacing:0.1px;color:#8a8a8a;">100M</div>
<div class="t" style="right:743px;top:409.00px;font-size:10.5px;line-height:10.5px;letter-spacing:0.1px;color:#8a8a8a;">10M</div>
<div class="t" style="right:743px;top:499.00px;font-size:10.5px;line-height:10.5px;letter-spacing:0.1px;color:#8a8a8a;">1M</div>
<div class="t" style="right:743px;top:588.00px;font-size:10.5px;line-height:10.5px;letter-spacing:0.1px;color:#8a8a8a;">100K</div>
<div class="t" style="left:279.0px;top:588.00px;font-size:10.5px;line-height:10.5px;letter-spacing:0.25px;color:#8a8a8a;">2013</div>
<div class="t" style="left:351.25px;top:588.00px;font-size:10.5px;line-height:10.5px;letter-spacing:0.25px;color:#8a8a8a;">2018</div>
<div class="t" style="left:423.5px;top:588.00px;font-size:10.5px;line-height:10.5px;letter-spacing:0.25px;color:#8a8a8a;">2023</div>
<div class="t" style="left:495.75px;top:588.00px;font-size:10.5px;line-height:10.5px;letter-spacing:0.25px;color:#8a8a8a;">2028</div>
<div class="t" style="left:568.0px;top:588.00px;font-size:10.5px;line-height:10.5px;letter-spacing:0.25px;color:#8a8a8a;">2033</div>
<div class="t" style="left:640.25px;top:588.00px;font-size:10.5px;line-height:10.5px;letter-spacing:0.25px;color:#8a8a8a;">2038</div>
<div class="t" style="left:712.5px;top:588.00px;font-size:10.5px;line-height:10.5px;letter-spacing:0.25px;color:#8a8a8a;">2043</div>
<div class="t" style="left:784.75px;top:588.00px;font-size:10.5px;line-height:10.5px;letter-spacing:0.25px;color:#8a8a8a;">2048</div>
<div class="t" style="left:857.0px;top:588.00px;font-size:10.5px;line-height:10.5px;letter-spacing:0.25px;color:#8a8a8a;">2053</div>
<div class="t" style="left:929.25px;top:588.00px;font-size:10.5px;line-height:10.5px;letter-spacing:0.25px;color:#8a8a8a;">2058</div>
<div class="t" style="left:223px;top:610.00px;font-size:11px;line-height:11px;letter-spacing:0.913px;color:#333;">Powered by Ibbotson Associates, a Morningstar Company.</div>
<div class="r" style="left:213px;top:643px;width:793px;height:35px;background:#e0e0e0;"></div>
<div class="r" style="left:223px;top:653px;width:63px;height:21px;box-sizing:border-box;background:linear-gradient(#fff 65%,#e6e6e6);border:1px solid #8c8c8c;"></div>
<div class="t" style="left:223px;top:658.69px;width:63px;text-align:center;font-size:11px;line-height:11px;letter-spacing:0.6px;color:#222;">Help</div>
<div class="r" style="left:651px;top:653px;width:63px;height:21px;box-sizing:border-box;background:linear-gradient(#fff 65%,#e6e6e6);border:1px solid #8c8c8c;"></div>
<div class="t" style="left:651px;top:658.69px;width:63px;text-align:center;font-size:11px;line-height:11px;letter-spacing:0.69px;color:#222;">Close</div>
<div class="r" style="left:720px;top:653px;width:63px;height:21px;box-sizing:border-box;background:linear-gradient(#fff 65%,#e6e6e6);border:1px solid #8c8c8c;"></div>
<div class="t" style="left:720px;top:658.69px;width:63px;text-align:center;font-size:11px;line-height:11px;letter-spacing:0.9px;color:#222;">Save</div>
<div class="r" style="left:789px;top:653px;width:64px;height:21px;box-sizing:border-box;background:linear-gradient(#fff 65%,#e6e6e6);border:1px solid #8c8c8c;"></div>
<div class="t" style="left:789px;top:658.69px;width:64px;text-align:center;font-size:11px;line-height:11px;letter-spacing:0.6px;color:#222;">Save As</div>
<div class="r" style="left:862px;top:653px;width:63px;height:21px;box-sizing:border-box;background:linear-gradient(#fff 65%,#e6e6e6);border:1px solid #8c8c8c;"></div>
<div class="t" style="left:862px;top:658.69px;width:63px;text-align:center;font-size:11px;line-height:11px;letter-spacing:0.6px;color:#222;">&lt; Prev</div>
<div class="r" style="left:932px;top:653px;width:63px;height:21px;box-sizing:border-box;background:linear-gradient(#fff 65%,#e6e6e6);border:1px solid #8c8c8c;"></div>
<div class="t" style="left:932px;top:658.69px;width:63px;text-align:center;font-size:11px;line-height:11px;letter-spacing:0.6px;color:#222;">Next &gt;</div>
</body></html>
